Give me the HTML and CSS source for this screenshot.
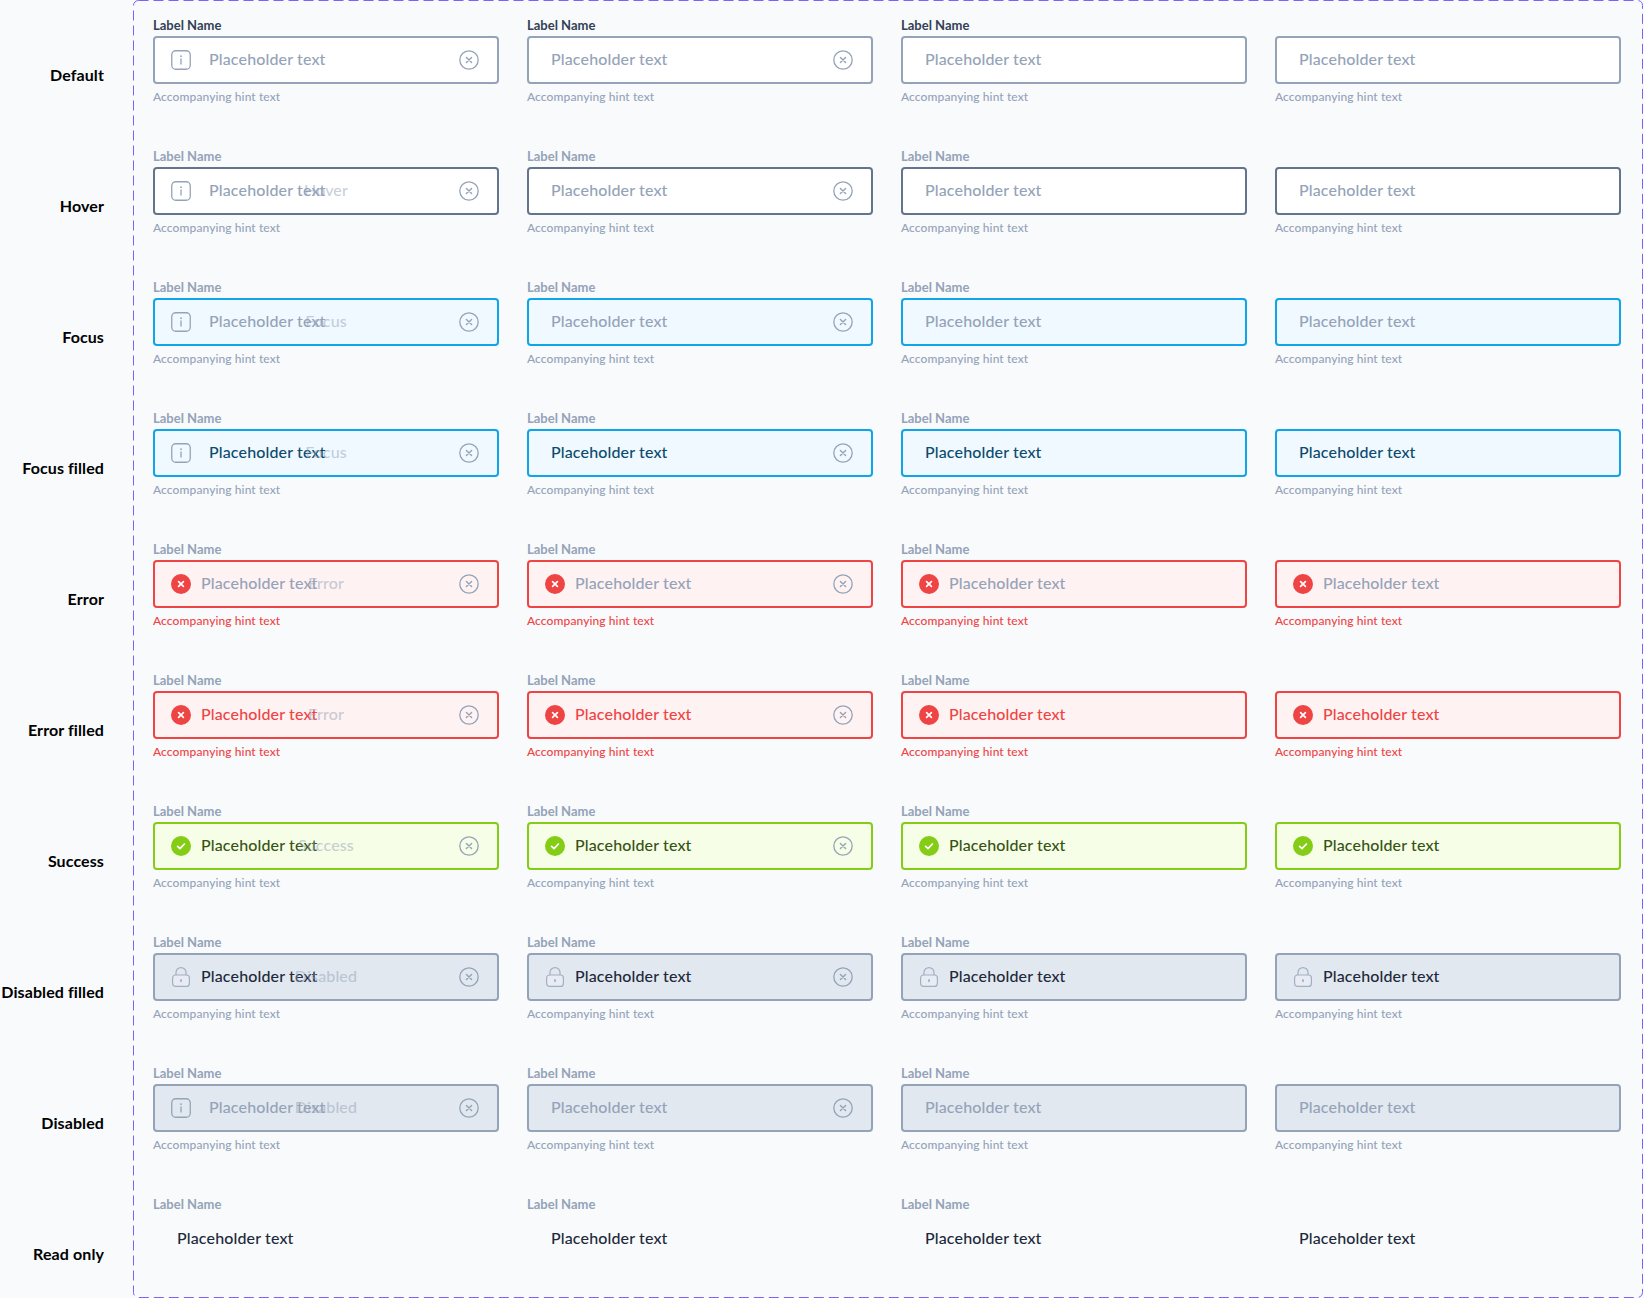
FILE: index.html
```html
<!DOCTYPE html>
<html lang="en">

<head>
  <meta charset="UTF-8">
  <meta name="viewport" content="width=device-width, initial-scale=1.0">
  <title>Text field states</title>
  <link rel="stylesheet" href="styles.css">
</head>

<body>
  <!-- Shared icons -->
  <svg class="sprite" aria-hidden="true">
    <symbol id="i-info" viewBox="0 0 20 20">
      <rect x="0.75" y="0.75" width="18.5" height="18.5" rx="4" fill="none" stroke="currentColor" stroke-width="1.3" />
      <path d="M10 9v5" fill="none" stroke="currentColor" stroke-width="1.3" stroke-linecap="round" />
      <circle cx="10" cy="6.2" r="0.9" fill="currentColor" />
    </symbol>
    <symbol id="i-clear" viewBox="0 0 20 20">
      <circle cx="10" cy="10" r="9.2" fill="none" stroke="currentColor" stroke-width="1.3" />
      <path d="M7.4 7.4l5.2 5.2M12.6 7.4l-5.2 5.2" fill="none" stroke="currentColor" stroke-width="1.4" stroke-linecap="round" />
    </symbol>
    <symbol id="i-error" viewBox="0 0 20 20">
      <circle cx="10" cy="10" r="10" fill="#ef4444" />
      <path d="M7.6 7.6l4.8 4.8M12.4 7.6l-4.8 4.8" fill="none" stroke="#fff" stroke-width="1.7" stroke-linecap="round" />
    </symbol>
    <symbol id="i-success" viewBox="0 0 20 20">
      <circle cx="10" cy="10" r="10" fill="#84cc16" />
      <path d="M6.6 10.4l2.4 2.2 4.4-4.6" fill="none" stroke="#fff" stroke-width="1.7" stroke-linecap="round" stroke-linejoin="round" />
    </symbol>
    <symbol id="i-lock" viewBox="0 0 20 20">
      <rect x="1.6" y="8" width="16.8" height="11.4" rx="3" fill="#e9edf3" stroke="#a3afc2" stroke-width="1.2" />
      <path d="M5 8V5.4a5 4.8 0 0 1 10 0V8" fill="none" stroke="#a3afc2" stroke-width="1.2" />
      <path d="M10 12.8v1.8" fill="none" stroke="#94a3b8" stroke-width="1.4" stroke-linecap="round" />
    </symbol>
  </svg>

  <div class="sheet">
    <svg class="frame" aria-hidden="true"><rect /></svg>

    <section class="row default">
      <h2 class="state">Default</h2>
      <div class="field label-dark"><label class="label">Label Name</label><div class="input"><svg class="lead"><use href="#i-info" /></svg><span class="value indented">Placeholder text</span><svg class="clear"><use href="#i-clear" /></svg></div><p class="hint">Accompanying hint text</p></div>
      <div class="field label-dark"><label class="label">Label Name</label><div class="input"><span class="value">Placeholder text</span><svg class="clear"><use href="#i-clear" /></svg></div><p class="hint">Accompanying hint text</p></div>
      <div class="field label-dark"><label class="label">Label Name</label><div class="input"><span class="value">Placeholder text</span></div><p class="hint">Accompanying hint text</p></div>
      <div class="field no-label"><div class="input"><span class="value">Placeholder text</span></div><p class="hint">Accompanying hint text</p></div>
    </section>

    <section class="row hover">
      <h2 class="state">Hover</h2>
      <div class="field"><label class="label">Label Name</label><div class="input"><svg class="lead"><use href="#i-info" /></svg><span class="value indented">Placeholder text</span><span class="ghost">Hover</span><svg class="clear"><use href="#i-clear" /></svg></div><p class="hint">Accompanying hint text</p></div>
      <div class="field"><label class="label">Label Name</label><div class="input"><span class="value">Placeholder text</span><svg class="clear"><use href="#i-clear" /></svg></div><p class="hint">Accompanying hint text</p></div>
      <div class="field"><label class="label">Label Name</label><div class="input"><span class="value">Placeholder text</span></div><p class="hint">Accompanying hint text</p></div>
      <div class="field no-label"><div class="input"><span class="value">Placeholder text</span></div><p class="hint">Accompanying hint text</p></div>
    </section>

    <section class="row focus">
      <h2 class="state">Focus</h2>
      <div class="field"><label class="label">Label Name</label><div class="input"><svg class="lead"><use href="#i-info" /></svg><span class="value indented">Placeholder text</span><span class="ghost">Focus</span><svg class="clear"><use href="#i-clear" /></svg></div><p class="hint">Accompanying hint text</p></div>
      <div class="field"><label class="label">Label Name</label><div class="input"><span class="value">Placeholder text</span><svg class="clear"><use href="#i-clear" /></svg></div><p class="hint">Accompanying hint text</p></div>
      <div class="field"><label class="label">Label Name</label><div class="input"><span class="value">Placeholder text</span></div><p class="hint">Accompanying hint text</p></div>
      <div class="field no-label"><div class="input"><span class="value">Placeholder text</span></div><p class="hint">Accompanying hint text</p></div>
    </section>

    <section class="row focus filled">
      <h2 class="state">Focus filled</h2>
      <div class="field"><label class="label">Label Name</label><div class="input"><svg class="lead"><use href="#i-info" /></svg><span class="value indented">Placeholder text</span><span class="ghost">Focus</span><svg class="clear"><use href="#i-clear" /></svg></div><p class="hint">Accompanying hint text</p></div>
      <div class="field"><label class="label">Label Name</label><div class="input"><span class="value">Placeholder text</span><svg class="clear"><use href="#i-clear" /></svg></div><p class="hint">Accompanying hint text</p></div>
      <div class="field"><label class="label">Label Name</label><div class="input"><span class="value">Placeholder text</span></div><p class="hint">Accompanying hint text</p></div>
      <div class="field no-label"><div class="input"><span class="value">Placeholder text</span></div><p class="hint">Accompanying hint text</p></div>
    </section>

    <section class="row error">
      <h2 class="state">Error</h2>
      <div class="field"><label class="label">Label Name</label><div class="input"><svg class="lead"><use href="#i-error" /></svg><span class="value">Placeholder text</span><span class="ghost">Error</span><svg class="clear"><use href="#i-clear" /></svg></div><p class="hint">Accompanying hint text</p></div>
      <div class="field"><label class="label">Label Name</label><div class="input"><svg class="lead"><use href="#i-error" /></svg><span class="value">Placeholder text</span><svg class="clear"><use href="#i-clear" /></svg></div><p class="hint">Accompanying hint text</p></div>
      <div class="field"><label class="label">Label Name</label><div class="input"><svg class="lead"><use href="#i-error" /></svg><span class="value">Placeholder text</span></div><p class="hint">Accompanying hint text</p></div>
      <div class="field no-label"><div class="input"><svg class="lead"><use href="#i-error" /></svg><span class="value">Placeholder text</span></div><p class="hint">Accompanying hint text</p></div>
    </section>

    <section class="row error filled">
      <h2 class="state">Error filled</h2>
      <div class="field"><label class="label">Label Name</label><div class="input"><svg class="lead"><use href="#i-error" /></svg><span class="value">Placeholder text</span><span class="ghost">Error</span><svg class="clear"><use href="#i-clear" /></svg></div><p class="hint">Accompanying hint text</p></div>
      <div class="field"><label class="label">Label Name</label><div class="input"><svg class="lead"><use href="#i-error" /></svg><span class="value">Placeholder text</span><svg class="clear"><use href="#i-clear" /></svg></div><p class="hint">Accompanying hint text</p></div>
      <div class="field"><label class="label">Label Name</label><div class="input"><svg class="lead"><use href="#i-error" /></svg><span class="value">Placeholder text</span></div><p class="hint">Accompanying hint text</p></div>
      <div class="field no-label"><div class="input"><svg class="lead"><use href="#i-error" /></svg><span class="value">Placeholder text</span></div><p class="hint">Accompanying hint text</p></div>
    </section>

    <section class="row success">
      <h2 class="state">Success</h2>
      <div class="field"><label class="label">Label Name</label><div class="input"><svg class="lead"><use href="#i-success" /></svg><span class="value">Placeholder text</span><span class="ghost">Success</span><svg class="clear"><use href="#i-clear" /></svg></div><p class="hint">Accompanying hint text</p></div>
      <div class="field"><label class="label">Label Name</label><div class="input"><svg class="lead"><use href="#i-success" /></svg><span class="value">Placeholder text</span><svg class="clear"><use href="#i-clear" /></svg></div><p class="hint">Accompanying hint text</p></div>
      <div class="field"><label class="label">Label Name</label><div class="input"><svg class="lead"><use href="#i-success" /></svg><span class="value">Placeholder text</span></div><p class="hint">Accompanying hint text</p></div>
      <div class="field no-label"><div class="input"><svg class="lead"><use href="#i-success" /></svg><span class="value">Placeholder text</span></div><p class="hint">Accompanying hint text</p></div>
    </section>

    <section class="row disabled filled">
      <h2 class="state">Disabled filled</h2>
      <div class="field"><label class="label">Label Name</label><div class="input"><svg class="lead"><use href="#i-lock" /></svg><span class="value">Placeholder text</span><span class="ghost">Disabled</span><svg class="clear"><use href="#i-clear" /></svg></div><p class="hint">Accompanying hint text</p></div>
      <div class="field"><label class="label">Label Name</label><div class="input"><svg class="lead"><use href="#i-lock" /></svg><span class="value">Placeholder text</span><svg class="clear"><use href="#i-clear" /></svg></div><p class="hint">Accompanying hint text</p></div>
      <div class="field"><label class="label">Label Name</label><div class="input"><svg class="lead"><use href="#i-lock" /></svg><span class="value">Placeholder text</span></div><p class="hint">Accompanying hint text</p></div>
      <div class="field no-label"><div class="input"><svg class="lead"><use href="#i-lock" /></svg><span class="value">Placeholder text</span></div><p class="hint">Accompanying hint text</p></div>
    </section>

    <section class="row disabled">
      <h2 class="state">Disabled</h2>
      <div class="field"><label class="label">Label Name</label><div class="input"><svg class="lead"><use href="#i-info" /></svg><span class="value indented">Placeholder text</span><span class="ghost">Disabled</span><svg class="clear"><use href="#i-clear" /></svg></div><p class="hint">Accompanying hint text</p></div>
      <div class="field"><label class="label">Label Name</label><div class="input"><span class="value">Placeholder text</span><svg class="clear"><use href="#i-clear" /></svg></div><p class="hint">Accompanying hint text</p></div>
      <div class="field"><label class="label">Label Name</label><div class="input"><span class="value">Placeholder text</span></div><p class="hint">Accompanying hint text</p></div>
      <div class="field no-label"><div class="input"><span class="value">Placeholder text</span></div><p class="hint">Accompanying hint text</p></div>
    </section>

    <section class="row readonly">
      <h2 class="state">Read only</h2>
      <div class="field"><label class="label">Label Name</label><div class="input"><span class="value">Placeholder text</span></div></div>
      <div class="field"><label class="label">Label Name</label><div class="input"><span class="value">Placeholder text</span></div></div>
      <div class="field"><label class="label">Label Name</label><div class="input"><span class="value">Placeholder text</span></div></div>
      <div class="field no-label"><div class="input"><span class="value">Placeholder text</span></div></div>
    </section>
  </div>
</body>

</html>
```

FILE: styles.css
```css
body {
  margin: 0;
  background: #f8fafc;
  font-family: Lato, "Open Sans", sans-serif;
}

.sprite {
  display: none;
}

.sheet {
  position: relative;
  width: 1644px;
  height: 1298px;
  overflow: hidden;
}

/* dashed component-set outline */
.frame {
  position: absolute;
  top: 0;
  left: 133px;
  width: 1510px;
  height: 1298px;
  pointer-events: none;
}

.frame rect {
  x: 0.5px;
  y: 0.5px;
  width: 1509px;
  height: 1297px;
  rx: 5px;
  fill: none;
  stroke: #7b61ff;
  stroke-width: 1;
  stroke-dasharray: 10 5;
}

.row {
  display: grid;
  grid-template-columns: repeat(4, 346px);
  column-gap: 28px;
  height: 131px;
  padding-left: 153px;
  position: relative;
}

.state {
  position: absolute;
  top: 65px;
  left: 0;
  width: 104px;
  margin: 0;
  font-size: 16px;
  line-height: 20px;
  font-weight: 700;
  letter-spacing: 0.1px;
  text-align: right;
  white-space: nowrap;
  color: #000;
}

.field {
  padding-top: 17px;
}

.label {
  display: block;
  height: 16px;
  margin-bottom: 3px;
  font-size: 13px;
  line-height: 16px;
  font-weight: 700;
  color: #94a3b8;
}

.label-dark .label {
  color: #334155;
}

.no-label {
  padding-top: 36px;
}

.input {
  position: relative;
  display: flex;
  align-items: center;
  box-sizing: border-box;
  height: 48px;
  padding: 0 18px 0 22px;
  background: #fff;
  border: 2px solid #94a3b8;
  border-radius: 4px;
}

.lead {
  flex: none;
  width: 20px;
  height: 20px;
  margin: 0 10px 0 -6px;
  color: #94a3b8;
}

.value {
  margin-bottom: 2px;
  font-size: 16px;
  line-height: 24px;
  font-weight: 500;
  letter-spacing: 0.14px;
  color: #94a3b8;
  white-space: nowrap;
}

.indented {
  margin-left: 8px;
}

/* state name left faintly over the first field of each row */
.ghost {
  position: absolute;
  left: 0;
  right: 0;
  margin-bottom: 2px;
  text-align: center;
  font-size: 16px;
  line-height: 24px;
  font-weight: 500;
  letter-spacing: 0.14px;
  color: #94a3b8;
  opacity: 0.5;
}

.clear {
  flex: none;
  width: 20px;
  height: 20px;
  margin-left: auto;
  color: #94a3b8;
}

.hint {
  margin: 5px 0 0;
  font-size: 12px;
  line-height: 16px;
  font-weight: 500;
  letter-spacing: 0.1px;
  color: #94a3b8;
}

.hover .input {
  border-color: #64748b;
}

.focus .input {
  background: #f0f9ff;
  border-color: #0ea5e9;
}

.focus.filled .value {
  color: #0c4a6e;
}

.error .input {
  background: #fef2f2;
  border-color: #ef4444;
}

.error .hint {
  color: #ef4444;
}

.error.filled .value {
  color: #ef4444;
}

.success .input {
  background: #f7fee7;
  border-color: #84cc16;
}

.success .value {
  color: #365314;
}

.disabled .input {
  background: #e2e8f0;
}

.disabled.filled .value {
  color: #1e293b;
}

.readonly .input {
  background: none;
  border-color: transparent;
}

.readonly .value {
  color: #1e293b;
}
```
